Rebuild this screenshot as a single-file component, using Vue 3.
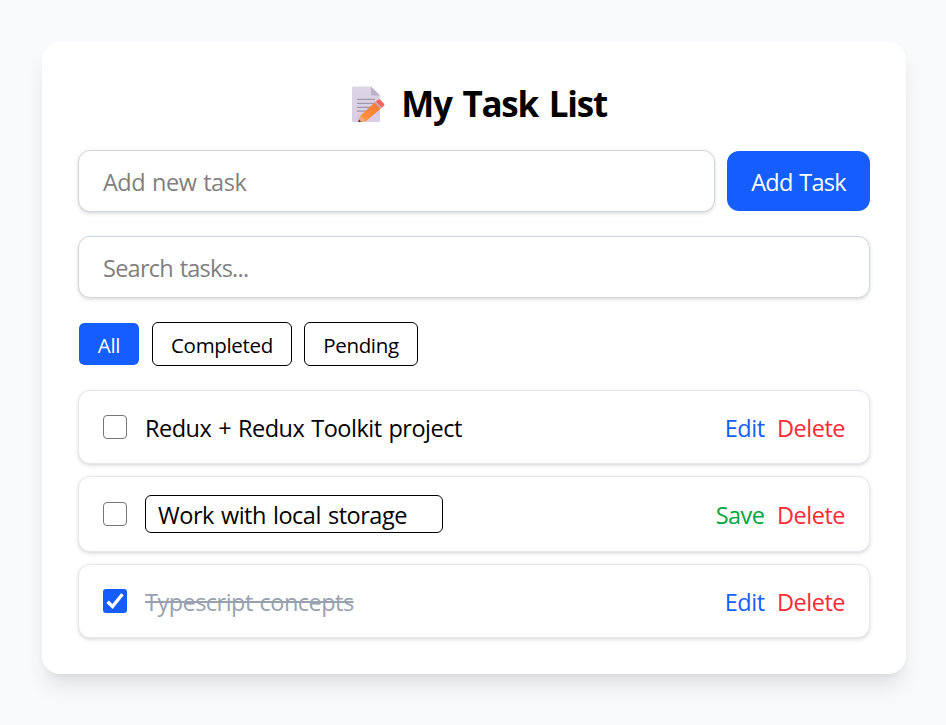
<script setup>
import { ref, computed } from 'vue'

const newTask = ref('')
const search = ref('')
const filter = ref('All')
const filters = ['All', 'Completed', 'Pending']
const tasks = ref([
  { id: 1, text: 'Redux + Redux Toolkit project', done: false, editing: false },
  { id: 2, text: 'Work with local storage', done: false, editing: true },
  { id: 3, text: 'Typescript concepts', done: true, editing: false },
])

const visible = computed(() =>
  tasks.value.filter(
    (t) =>
      t.text.toLowerCase().includes(search.value.toLowerCase()) &&
      (filter.value === 'All' || (filter.value === 'Completed') === t.done)
  )
)

function addTask() {
  const text = newTask.value.trim()
  if (!text) return
  tasks.value.push({ id: Date.now(), text, done: false, editing: false })
  newTask.value = ''
}

function remove(id) {
  tasks.value = tasks.value.filter((t) => t.id !== id)
}
</script>

<template>
  <main class="page">
    <section class="card">
      <h1 class="title">
        <svg class="memo" viewBox="0 0 36 40" aria-hidden="true">
          <defs>
            <linearGradient id="paper" x1="0" y1="0" x2="0.3" y2="1">
              <stop offset="0" stop-color="#dcd6e4" />
              <stop offset="1" stop-color="#d9cce4" />
            </linearGradient>
            <linearGradient id="pencil" x1="0" y1="1" x2="1" y2="0">
              <stop offset="0" stop-color="#fb9b45" />
              <stop offset="1" stop-color="#ff7430" />
            </linearGradient>
          </defs>
          <path d="M3.5 2.500H21l9 9v25a1.500 1.500 0 0 1-1.500 1.500h-25A1.500 1.500 0 0 1 2 36.500v-32.500A1.500 1.500 0 0 1 3.500 2.500z" fill="url(#paper)" />
          <path d="M21 2.500l9 9h-7.500A1.500 1.500 0 0 1 21 10z" fill="#bcb1c6" />
          <path d="M7.500 15.300h17M7.500 19.300h17M7.500 23.300h14M7.500 27.200h9" stroke="#a397ac" stroke-width="1.300" stroke-linecap="round" />
          <path d="M10.500 31.400L25.500 17.800l6 6.200L15.900 37.300l-7.700.7z" fill="url(#pencil)" />
          <path d="M10.500 31.400l5.400 5.900L8.200 38z" fill="#f0aa78" />
          <path d="M9 35.400l2.200 2.300-3 .3z" fill="#56313f" />
          <path d="M24.500 18.800l1.900-1.700 6 6.200-1.900 1.600z" fill="#c9a5b5" />
          <path d="M26 17.500l2-1.700a1.700 1.700 0 0 1 2.300 0l3.700 3.900a1.500 1.500 0 0 1-.1 2.200l-1.900 1.600z" fill="#fa6260" />
        </svg>
        <span>My Task List</span>
      </h1>

      <form class="add" @submit.prevent="addTask">
        <input v-model="newTask" class="field" placeholder="Add new task" />
        <button class="add-button" type="submit">Add Task</button>
      </form>

      <input v-model="search" class="field search" placeholder="Search tasks..." />

      <div class="filters">
        <button
          v-for="f in filters"
          :key="f"
          class="filter"
          :class="[f.toLowerCase(), { active: f === filter }]"
          @click="filter = f"
        >{{ f }}</button>
      </div>

      <ul class="tasks">
        <li v-for="t in visible" :key="t.id" class="task" :class="{ 'is-editing': t.editing }">
          <label class="check">
            <input v-model="t.done" type="checkbox" />
            <svg v-if="t.done" viewBox="0 0 24 24" aria-hidden="true">
              <path d="M4.600 12.800l4.900 4.700L19.400 5.300" />
            </svg>
          </label>
          <input v-if="t.editing" v-model="t.text" class="edit-field" />
          <span v-else class="text" :class="{ done: t.done }">{{ t.text }}</span>
          <div class="actions">
            <button class="link save" v-if="t.editing" @click="t.editing = false">Save</button>
            <button class="link edit" v-else @click="t.editing = true">Edit</button>
            <button class="link delete" @click="remove(t.id)">Delete</button>
          </div>
        </li>
      </ul>
    </section>
  </main>
</template>

<style>
body {
  background: #f9fafb;
}
</style>

<style scoped>
.page,
.page * {
  box-sizing: border-box;
}
.page {
  min-height: 725px;
  padding: 42px 40px 0 42px;
  background: #f9fafb;
  color: #000;
  font: 23.5px/36px "Open Sans", sans-serif;
  letter-spacing: -0.5px;
  word-spacing: 1.3px;
}
input,
button {
  margin: 0;
  font: inherit;
  letter-spacing: inherit;
  word-spacing: inherit;
  color: inherit;
}
button {
  padding: 0;
  border: 0;
  background: none;
  cursor: pointer;
  white-space: nowrap;
}
.card {
  height: 632px;
  padding: 36px;
  border-radius: 18px;
  background: #fff;
  box-shadow: 0 15px 22.5px -4.5px rgba(0, 0, 0, 0.1), 0 6px 9px -6px rgba(0, 0, 0, 0.1);
}
.title {
  display: flex;
  justify-content: center;
  align-items: center;
  gap: 15px;
  height: 54px;
  margin: 0 0 18px;
  padding: 0 0 2px 9px;
  font-size: 35px;
  font-weight: 700;
  line-height: 50px;
  letter-spacing: -1.25px;
  word-spacing: 3px;
}
.memo {
  width: 36px;
  height: 40px;
}
.add {
  display: flex;
  align-items: center;
  gap: 12px;
  margin-bottom: 24px;
}
.field {
  display: block;
  min-width: 0;
  width: 100%;
  height: 62px;
  padding: 2px 24px 0;
  border: 1px solid #d1d5dc;
  border-radius: 12px;
  background: #fff;
  outline: none;
  box-shadow: 0 1.5px 4px rgba(0, 0, 0, 0.1), 0 1.5px 3px -1.5px rgba(0, 0, 0, 0.1);
}
.add .field {
  flex: 1;
}
.field::placeholder {
  color: #7f7f7f;
  opacity: 1;
}
.add-button {
  flex: none;
  width: 143px;
  height: 60px;
  padding-top: 2px;
  border-radius: 12px;
  background: #155dfc;
  color: #fff;
  letter-spacing: -0.75px;
}
.search {
  margin-bottom: 24px;
  letter-spacing: -0.74px;
}
.filters {
  display: flex;
  gap: 12px;
  margin-bottom: 24px;
}
.filter {
  height: 44px;
  padding-top: 2px;
  border: 1px solid #000;
  border-radius: 6px;
  background: #fff;
  font-size: 20.5px;
  line-height: 30px;
  letter-spacing: -0.32px;
}
.all {
  width: 62px;
}
.completed {
  width: 140px;
}
.pending {
  width: 114px;
}
.filter.active {
  border-color: #fff;
  background: #155dfc;
  background-clip: padding-box;
  color: #fff;
}
.tasks {
  display: flex;
  flex-direction: column;
  gap: 12px;
  margin: 0;
  padding: 0;
  list-style: none;
}
.task {
  display: flex;
  align-items: center;
  height: 74px;
  padding: 0 24px;
  border: 1px solid #e5e7eb;
  border-radius: 12px;
  background: #fff;
  box-shadow: 0 1.5px 4px rgba(0, 0, 0, 0.1), 0 1.5px 3px -1.5px rgba(0, 0, 0, 0.1);
}
.is-editing {
  height: 76px;
}
.check {
  display: grid;
  flex: none;
  width: 24px;
  height: 24px;
  margin-right: 18px;
}
.check input,
.check svg {
  grid-area: 1 / 1;
  width: 24px;
  height: 24px;
}
.check input {
  appearance: none;
  border: 1.5px solid #767676;
  border-radius: 4px;
  background: #fff;
}
.check input:checked {
  border: 0;
  border-radius: 3px;
  background: #155dfc;
}
.check svg {
  fill: none;
  stroke: #fff;
  stroke-width: 3.4;
  pointer-events: none;
}
.text {
  padding-top: 2px;
}
.done {
  color: #99a1af;
  text-decoration: line-through;
  letter-spacing: -0.53px;
}
.edit-field {
  width: 298px;
  height: 38px;
  padding: 2px 12px 0;
  border: 1px solid #000;
  border-radius: 6px;
  background: #fff;
  outline: none;
  letter-spacing: -0.46px;
}
.actions {
  display: flex;
  gap: 12.5px;
  margin-left: auto;
  padding-top: 2px;
}
.edit {
  color: #155dfc;
}
.save {
  color: #00a63e;
}
.delete {
  color: #fb2c36;
}
</style>
